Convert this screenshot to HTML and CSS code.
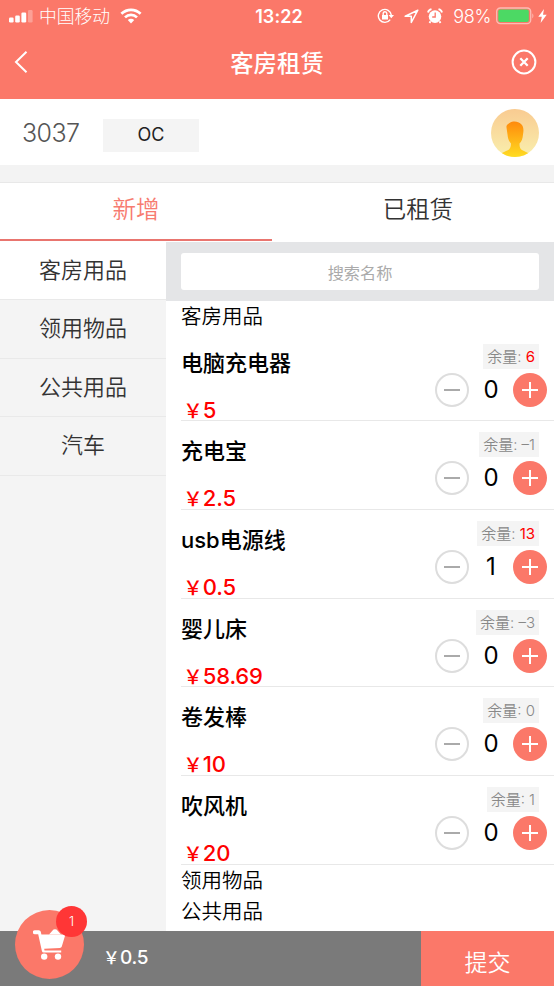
FILE: index.html
```html
<!DOCTYPE html>
<html lang="zh-CN">
<head>
<meta charset="utf-8">
<title>客房租赁</title>
<link rel="stylesheet" href="styles.css">
</head>
<body>
<div class="app">
  <header class="header">
    <div class="status">
      <div class="status-left">
        <svg class="signal" width="24" height="13" viewBox="0 0 24 13" fill="#fff"><rect x="0" y="7.5" width="4.6" height="5" rx="1.2"/><rect x="6.2" y="5.5" width="4.6" height="7" rx="1.2"/><rect x="12.4" y="2.5" width="4.8" height="10" rx="1.2"/><rect x="19" y="0" width="4.6" height="12.5" rx="1.2" opacity=".3"/></svg>
        <span class="carrier">中国移动</span>
        <svg class="wifi" width="22" height="16" viewBox="0 0 22 16" fill="none" stroke="#fff" stroke-width="2.7"><path d="M1.4 5.8C6.8.5 15.2.5 20.6 5.8"/><path d="M5 9.4c3.4-3.3 8.600-3.300 12 0"/><path d="M7.800 12.100c1.800-1.700 4.600-1.700 6.400 0L11 15.400z" fill="#fff" stroke="none"/></svg>
      </div>
      <span class="time">13:22</span>
      <div class="status-right">
        <svg width="18" height="16" viewBox="0 0 18 16" fill="none" stroke="#fff" stroke-width="1.4"><path d="M13.200 11.600A6.500 6.500 0 1 1 14.300 7.200"/><path d="M11.600 7h5.400l-2.700 3.300z" fill="#fff" stroke="none"/><rect x="5" y="7" width="6" height="4.500" fill="#fff" stroke="none"/><path d="M6.200 7V5.600a1.800 1.800 0 0 1 3.600 0V7"/></svg>
        <svg class="arrow" width="15" height="15" viewBox="0 0 15 15" fill="none" stroke="#fff" stroke-width="1.500" stroke-linejoin="round"><path d="M13.800 1.200 1.200 7.300H7.300v6.200z"/></svg>
        <svg class="alarm" width="16" height="16" viewBox="0 0 16 16"><circle cx="8" cy="8.600" r="6.300" fill="#fff"/><path d="M3.500 13.200 2.500 15M12.500 13.200l1 1.800M1 4.500Q1.500 2 4.500 1.200M15 4.500Q14.500 2 11.500 1.200" stroke="#fff" stroke-width="1.800" fill="none"/><path d="M8.200 4.500V9H5.200" stroke="#fc7769" stroke-width="1.300" fill="none"/></svg>
        <span class="percent">98%</span>
        <svg class="battery" width="39" height="18" viewBox="0 0 39 18"><rect x=".7" y="1" width="34" height="15.600" rx="3.600" fill="none" stroke="#fff" stroke-opacity=".5" stroke-width="1.300"/><rect x="2.300" y="2.600" width="30.500" height="12.400" rx="2" fill="#4cd964"/><path d="M36.300 6.200q2.200 2.600 0 5.200z" fill="#fff" opacity=".5"/></svg>
        <svg class="bolt" width="9" height="14" viewBox="0 0 9 14" fill="#fff"><path d="M6 0 .3 7.700h3.500L2.600 14 8.700 5.700H5z"/></svg>
      </div>
    </div>
    <div class="nav">
      <svg class="back" width="14" height="24" viewBox="0 0 14 24" fill="none" stroke="#fff" stroke-width="2"><path d="M12.500 1.800 2 12l10.500 10.200"/></svg>
      <h1 class="title">客房租赁</h1>
      <svg class="close" width="26" height="26" viewBox="0 0 26 26" fill="none" stroke="#fff" stroke-width="2"><circle cx="13" cy="13" r="11.400"/><path d="m9.300 9.300 7.400 7.400m0-7.400-7.400 7.400" stroke-width="2.300"/></svg>
    </div>
  </header>

  <section class="room">
    <span class="room-no">3037</span>
    <span class="room-state">OC</span>
    <svg class="avatar" width="48" height="48" viewBox="0 0 48 48">
      <defs>
        <linearGradient id="bg" x1="0" y1="0" x2="0" y2="1"><stop offset="0" stop-color="#f9cb91"/><stop offset="1" stop-color="#f9efad"/></linearGradient>
        <linearGradient id="man" x1="0" y1="0" x2="0" y2="1"><stop offset="0" stop-color="#ff8a0c"/><stop offset="1" stop-color="#ffdc22"/></linearGradient>
        <clipPath id="disc"><circle cx="24" cy="24" r="24"/></clipPath>
      </defs>
      <g clip-path="url(#disc)"><rect width="48" height="48" fill="url(#bg)"/><path d="M15.500 18.500c-.5-2.500 1.500-3.500 3-4.500 4-2.500 9-1.500 11.500 1 2.800 2.500 2.800 6 2 10.500-.3 4.500-1.500 7-3.500 9 0 5 1.500 6.500 4.500 7.500l5 2.500V48H10v-3.500l5-2.500c3-1 5-2.500 5-7.500-2-2-3.200-5-3.500-9z" fill="url(#man)"/></g>
    </svg>
  </section>

  <nav class="tabs"><a class="tab tab-on">新增</a><a class="tab">已租赁</a></nav>

  <main class="main">
    <aside class="side">
      <a class="cat cat-on">客房用品</a>
      <a class="cat">领用物品</a>
      <a class="cat">公共用品</a>
      <a class="cat">汽车</a>
    </aside>
    <section class="goods">
      <div class="search"><div class="search-box">搜索名称</div></div>
      <div class="list">
        <h2 class="group">客房用品</h2>
        <article class="item"><div class="info"><h3 class="name">电脑充电器</h3><p class="price"><span class="yen">￥</span>5</p></div><div class="ops"><span class="stock">余量: <b class="has">6</b></span><div class="stepper"><i class="btn minus"></i><span class="qty">0</span><i class="btn plus"></i></div></div></article>
        <article class="item"><div class="info"><h3 class="name">充电宝</h3><p class="price"><span class="yen">￥</span>2.5</p></div><div class="ops"><span class="stock">余量: –1</span><div class="stepper"><i class="btn minus"></i><span class="qty">0</span><i class="btn plus"></i></div></div></article>
        <article class="item"><div class="info"><h3 class="name">usb电源线</h3><p class="price"><span class="yen">￥</span>0.5</p></div><div class="ops"><span class="stock">余量: <b class="has">13</b></span><div class="stepper"><i class="btn minus"></i><span class="qty">1</span><i class="btn plus"></i></div></div></article>
        <article class="item"><div class="info"><h3 class="name">婴儿床</h3><p class="price"><span class="yen">￥</span>58.69</p></div><div class="ops"><span class="stock">余量: –3</span><div class="stepper"><i class="btn minus"></i><span class="qty">0</span><i class="btn plus"></i></div></div></article>
        <article class="item"><div class="info"><h3 class="name">卷发棒</h3><p class="price"><span class="yen">￥</span>10</p></div><div class="ops"><span class="stock">余量: 0</span><div class="stepper"><i class="btn minus"></i><span class="qty">0</span><i class="btn plus"></i></div></div></article>
        <article class="item"><div class="info"><h3 class="name">吹风机</h3><p class="price"><span class="yen">￥</span>20</p></div><div class="ops"><span class="stock">余量: 1</span><div class="stepper"><i class="btn minus"></i><span class="qty">0</span><i class="btn plus"></i></div></div></article>
        <h2 class="group">领用物品</h2>
        <h2 class="group">公共用品</h2>
      </div>
    </section>
  </main>

  <footer class="footer">
    <div class="cart">
      <svg width="34" height="32" viewBox="0 0 34 32" fill="#fff"><path d="M1.800 1.200h4q1.600 0 2 1.600l.6 2.700h24L28.800 17.500q-.4 1.400-2 1.500l-15.600.8.3 1.600h16.700v2.200H10.600q-1.400 0-1.700-1.500L5.200 5.200H1.800a2 2 0 0 1 0-4z"/><path d="M16 5.500 20.500.6q1.500-.8 3 0L28 5.500z"/><circle cx="11.200" cy="27.600" r="3.200"/><circle cx="25" cy="27.600" r="3.200"/></svg>
      <span class="badge">1</span>
    </div>
    <span class="total"><span class="yen">￥</span>0.5</span>
    <button class="submit">提交</button>
  </footer>
</div>
</body>
</html>
```

FILE: styles.css
```css
* { box-sizing: border-box; margin: 0; padding: 0; }

body {
  font-family: Inter, "Noto Sans CJK SC", sans-serif;
  color: #000;
  background: #fff;
}

svg { display: block; flex: none; }

.app {
  width: 554px;
  height: 986px;
  display: flex;
  flex-direction: column;
  overflow: hidden;
}

.header { height: 99px; background: #fb7869; color: #fff; flex: none; }

.status {
  height: 30px;
  display: grid;
  grid-template-columns: 1fr auto 1fr;
  align-items: center;
  padding: 0 7px 0 9px;
}
.status-left, .status-right { display: flex; align-items: center; }
.status-right { justify-content: flex-end; }
.carrier { font-size: 17.8px; line-height: 30px; font-weight: 300; margin-left: 6px; padding-top: 2px; }
.wifi { margin-left: 10px; }
.time { font-size: 18px; font-weight: 600; letter-spacing: .1px; padding-left: 2px; }
.arrow { margin-left: 9px; }
.alarm { margin-left: 8px; }
.percent { font-size: 18px; font-weight: 300; letter-spacing: -.3px; margin-left: 10px; }
.battery { margin-left: 5px; }
.bolt { margin-left: 3px; }

.nav {
  height: 64px;
  display: grid;
  grid-template-columns: 1fr auto 1fr;
  align-items: center;
  padding: 0 17px 0 14px;
}
.close { justify-self: end; }
.title { font-size: 23.4px; font-weight: 500; line-height: 34px; padding: 4px 0 0 3px; }

.room {
  height: 66px;
  flex: none;
  display: flex;
  align-items: center;
  padding: 0 15px 0 22px;
}
.room-no { width: 81px; font-size: 25px; letter-spacing: -.6px; color: #555; font-weight: 350; padding-top: 1px; }
.room-state {
  width: 96px;
  height: 33px;
  margin-top: 6px;
  background: #f4f4f4;
  font-size: 18px;
  line-height: 32px;
  text-align: center;
  color: #222;
}
.avatar { margin-left: auto; margin-top: 1px; }

.tabs {
  height: 77px;
  flex: none;
  display: flex;
  justify-content: space-between;
  border-top: 17px solid #f3f3f3;
  box-shadow: inset 0 1px #e8e8e8;
}
.tab {
  width: 272px;
  height: 59px;
  font-size: 23.5px;
  line-height: 55px;
  text-align: center;
  color: #333;
  font-weight: 350;
}
.tab-on { color: #f77b70; border-bottom: 2px solid #e9756f; }

.main { flex: 1; min-height: 0; display: flex; }

.side { width: 166px; background: #f4f4f4; flex: none; }
.cat {
  display: block;
  height: 58.4px;
  border-bottom: 1px solid #e9e9e9;
  font-size: 22px;
  line-height: 57px;
  text-align: center;
  color: #333;
  font-weight: 350;
}
.cat-on { background: #fff; }

.goods { flex: 1; min-width: 0; }
.search { height: 59px; padding: 11px 15px; background: #e4e5e7; }
.search-box {
  height: 37px;
  border-radius: 3px;
  background: #fff;
  color: #aaa;
  font-size: 16.2px;
  line-height: 40px;
  text-align: center;
}
.list { padding-left: 15px; }
.group { height: 31px; font-size: 20.5px; font-weight: 350; line-height: 32px; }
.group:first-child { height: 31.6px; }

.item {
  height: 88.7px;
  display: flex;
  justify-content: space-between;
  border-bottom: 1px solid #e8e8e8;
}
.name { font-size: 22px; font-weight: 500; line-height: 32px; padding-top: 14px; }
.price { font-size: 22px; font-weight: 500; line-height: 32px; color: #f00; padding-top: 15px; letter-spacing: -.2px; }
.yen { display: inline-block; width: 1.05em; padding-left: .12em; font-size: .88em; margin-right: .08em; }
.ops {
  display: flex;
  flex-direction: column;
  align-items: flex-end;
  padding: 11px 7px 0 0;
}
.stock {
  height: 25px;
  margin-right: 8px;
  padding: 0 4px;
  background: #f4f4f4;
  font-size: 15px;
  line-height: 25px;
  color: #888;
  font-weight: 350;
  white-space: nowrap;
}
.has { color: #f00; font-weight: 400; }
.stepper { display: flex; align-items: center; margin-top: 4px; }
.qty { width: 44px; font-size: 24px; line-height: 34px; text-align: center; }
.btn {
  width: 34px;
  height: 34px;
  border-radius: 50%;
  background: linear-gradient(#aaa, #aaa) center / 16px 2px no-repeat;
}
.minus { border: 2px solid #ddd; }
.plus {
  background:
    linear-gradient(#fff, #fff) center / 16px 2px no-repeat,
    linear-gradient(#fff, #fff) center / 2px 16px no-repeat,
    #fb7869;
}

.footer {
  position: relative;
  height: 55px;
  flex: none;
  display: flex;
  background: #7a7a7a;
  color: #fff;
}
.cart {
  position: absolute;
  left: 15px;
  top: -21px;
  width: 69px;
  height: 69px;
  border-radius: 50%;
  background: #fb7869;
  padding: 19px 0 0 18px;
}
.badge {
  position: absolute;
  right: -3px;
  top: -4px;
  width: 31px;
  height: 31px;
  border-radius: 50%;
  background: #ff3636;
  font-size: 13px;
  font-weight: 300;
  line-height: 31px;
  text-align: center;
}
.total { padding-left: 101px; font-size: 19px; font-weight: 500; line-height: 54px; letter-spacing: -.2px; }
.submit {
  width: 133px;
  margin-left: auto;
  border: 0;
  background: #fb7869;
  color: #fff;
  font: 350 23px/55px Inter, "Noto Sans CJK SC", sans-serif;
  padding-top: 5px;
}
```
